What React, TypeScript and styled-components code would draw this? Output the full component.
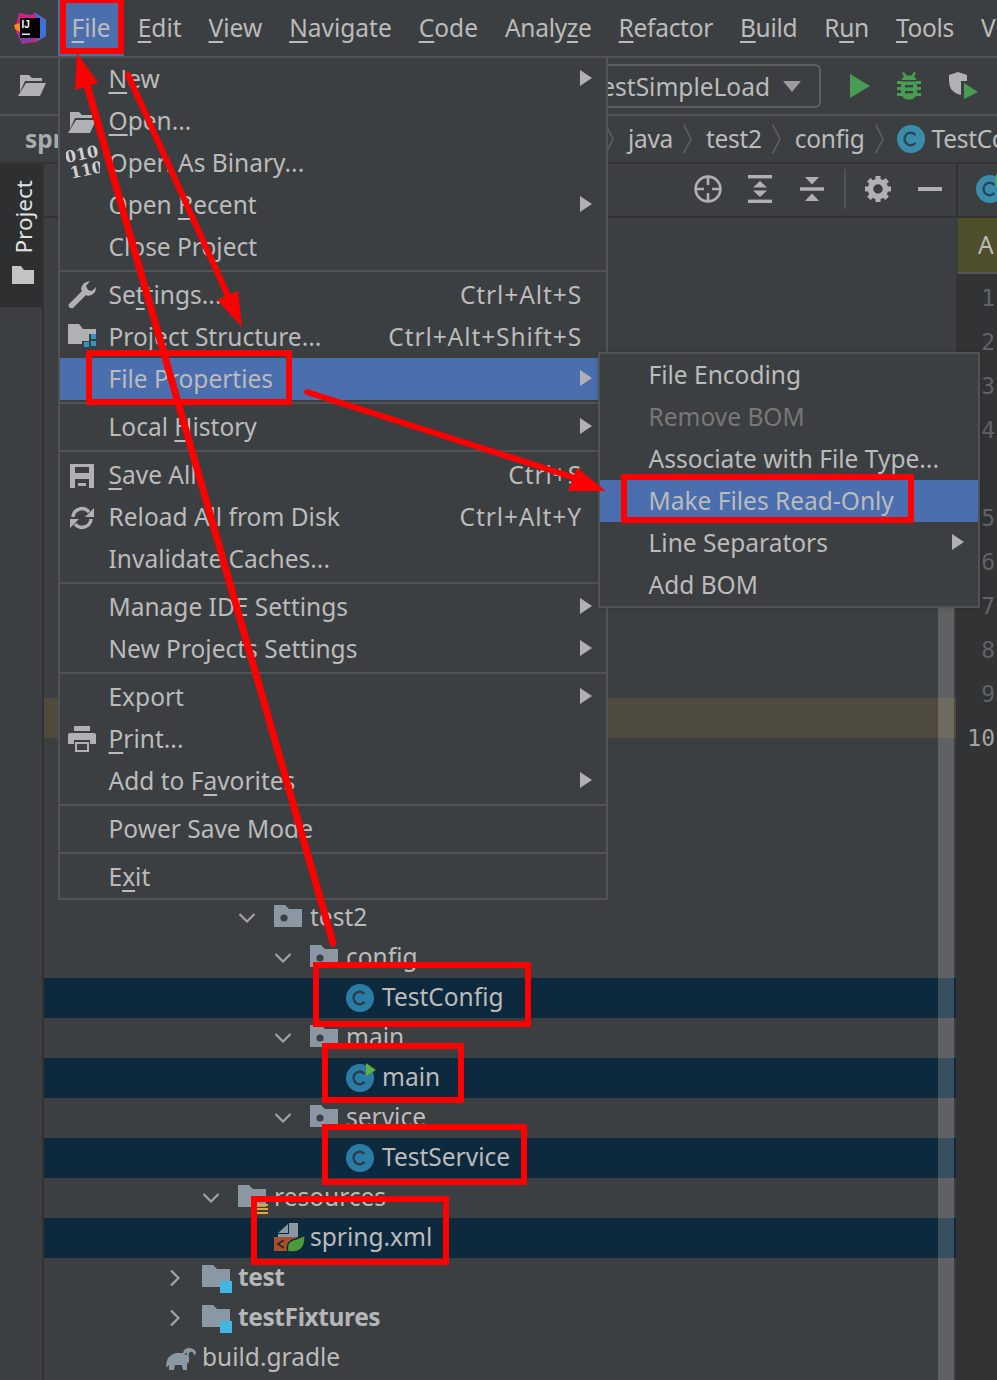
import React from 'react'
import styled, { createGlobalStyle } from 'styled-components'

const GlobalStyle = createGlobalStyle`
  html, body {
    margin: 0;
    padding: 0;
    background: #3c3f41;
  }
  * {
    box-sizing: border-box;
  }
`

const Page = styled.div`
  position: relative;
  width: 997px;
  height: 1380px;
  overflow: hidden;
  display: flex;
  flex-direction: column;
  background: #3c3f41;
  color: #bbbbbb;
  font-family: 'Noto Sans', 'Open Sans', sans-serif;
  font-size: 24.5px;
  line-height: 36px;
  white-space: nowrap;
`

const Mn = styled.span`
  text-decoration: underline;
  text-decoration-thickness: 2px;
  text-underline-offset: 4px;
  text-decoration-skip-ink: none;
`

/* menu bar */
const MenuBar = styled.div`
  flex: none;
  height: 58px;
  display: flex;
  border-bottom: 2px solid #515355;
  overflow: hidden;
`
const LogoSlot = styled.div`
  flex: none;
  width: 58px;
  padding: 12px 0 0 14px;
`
const MenuTitle = styled.div<{ $active?: boolean; $tight?: boolean }>`
  flex: none;
  height: 56px;
  padding: 10px 13.5px 0;
  letter-spacing: ${p => (p.$tight ? -0.3 : 0)}px;
  background: ${p => (p.$active ? '#4b6eaf' : 'transparent')};
`

/* toolbar */
const Toolbar = styled.div`
  flex: none;
  height: 58px;
  display: flex;
  align-items: center;
  padding: 0 19px 0 18px;
  border-bottom: 2px solid #515355;
`
const Combo = styled.div`
  margin-left: auto;
  height: 44px;
  display: flex;
  align-items: center;
  gap: 13px;
  padding: 1px 18px 0 20px;
  border: 2px solid #5e6060;
  border-radius: 6px;
`
const RunIcons = styled.div`
  display: flex;
  align-items: center;
  margin-left: 29px;
  gap: 27px;
`

/* breadcrumbs */
const NavBar = styled.div`
  flex: none;
  height: 48px;
  display: flex;
  align-items: center;
  padding: 0 0 0 25px;
  border-bottom: 2px solid #323232;
`
const RootCrumb = styled.span`
  flex: none;
  width: 570px;
  font-weight: 700;
  color: #a9abad;
`
const Crumb = styled.span<{ $withIcon?: boolean }>`
  flex: none;
  display: flex;
  align-items: center;
  gap: 7px;
  margin-left: ${p => (p.$withIcon ? -1 : 0)}px;
  letter-spacing: -0.3px;
`
const CrumbArrow = styled.svg`
  flex: none;
  margin: 0 14px 0 10px;
`

/* body */
const Body = styled.div`
  flex: 1;
  min-height: 0;
  display: flex;
`
const ToolStrip = styled.div`
  flex: none;
  width: 44px;
  border-right: 2px solid #323232;
`
const ProjectTab = styled.div`
  height: 143px;
  display: flex;
  flex-direction: column;
  align-items: center;
  padding: 16px 0 0 4px;
  gap: 12px;
  background: #2d2f30;
  color: #e2e2e2;
`
const TabLabel = styled.span`
  margin-left: 2px;
  writing-mode: vertical-rl;
  transform: rotate(180deg);
  font-size: 22.5px;
  line-height: 26px;
`

const ProjectPanel = styled.div`
  position: relative;
  flex: none;
  width: 912px;
  display: flex;
  flex-direction: column;
`
const PanelHeader = styled.div`
  flex: none;
  height: 54px;
  display: flex;
  justify-content: flex-end;
  align-items: center;
  border-bottom: 2px solid #323232;
  padding-bottom: 2px;
`
const HeaderSlot = styled.div`
  width: 52px;
  display: flex;
  justify-content: center;
`
const HeaderRule = styled.div`
  width: 2px;
  height: 40px;
  margin: 0 6px;
  background: #515355;
`
const Tree = styled.div`
  flex: 1;
  overflow: hidden;
`
const TreeRow = styled.div<{ $depth?: number; $tone?: 'selected' | 'caret' }>`
  height: 40px;
  display: flex;
  align-items: center;
  padding-left: ${p => 86 + (p.$depth ?? 0) * 36}px;
  background: ${p =>
    p.$tone === 'selected' ? '#0d293e' : p.$tone === 'caret' ? '#4e4a3e' : 'transparent'};
`
const Twisty = styled.div`
  flex: none;
  width: 36px;
  display: flex;
  align-items: center;
`
const TreeIcon = styled.div`
  flex: none;
  width: 36px;
  height: 28px;
`
const TreeLabel = styled.span<{ $bold?: boolean }>`
  padding-bottom: 3px;
  font-weight: ${p => (p.$bold ? 700 : 400)};
  letter-spacing: ${p => (p.$bold ? -0.4 : 0)}px;
  color: ${p => (p.$bold ? '#b4b6b8' : '#bbbbbb')};
`
const Scrollbar = styled.div`
  position: absolute;
  top: 400px;
  bottom: 0;
  left: 894px;
  width: 16px;
  background: rgba(255, 255, 255, 0.18);
`

/* editor edge */
const EditorColumn = styled.div`
  flex: 1;
  min-width: 0;
  overflow: hidden;
  display: flex;
  flex-direction: column;
`
const EditorTabs = styled.div`
  flex: none;
  height: 54px;
  display: flex;
  align-items: center;
  padding: 0 0 2px 18px;
  border-left: 2px solid #323232;
  border-bottom: 2px solid #323232;
`
const Banner = styled.div`
  flex: none;
  height: 56px;
  padding: 9px 0 0 20px;
  margin-left: 2px;
  background: #4f4f2b;
  border-bottom: 2px solid #555555;
`
const Gutter = styled.div`
  flex: 1;
  padding-top: 2px;
  background: #313335;
`
const LineNo = styled.div<{ $current?: boolean; $skip?: boolean }>`
  height: 44px;
  margin-top: ${p => (p.$skip ? 44 : 0)}px;
  padding-right: 2px;
  text-align: right;
  font-family: 'DejaVu Sans Mono', 'Liberation Mono', monospace;
  font-size: 23px;
  line-height: 44px;
  color: ${p => (p.$current ? '#a4a3a3' : '#606366')};
`

/* popup menus */
const Popup = styled.div`
  position: absolute;
  background: #3c3f41;
  border: 2px solid #515355;
`
const FileMenu = styled(Popup)`
  left: 58px;
  top: 56px;
  width: 550px;
`
const SubMenu = styled(Popup)`
  left: 598px;
  top: 352px;
  width: 382px;
  box-shadow: 0 0 6px rgba(0, 0, 0, 0.15);
`
const Item = styled.div<{ $active?: boolean; $disabled?: boolean }>`
  height: 42px;
  display: flex;
  align-items: center;
  padding-right: 14px;
  background: ${p => (p.$active ? '#4b6eaf' : 'transparent')};
  color: ${p => (p.$disabled ? '#777777' : '#bbbbbb')};
`
const ItemIcon = styled.div`
  flex: none;
  width: 48.5px;
  padding-left: 8px;
  height: 28px;
`
const ItemLabel = styled.span``
const Shortcut = styled.span`
  margin-left: auto;
  margin-right: 10px;
  letter-spacing: 0.9px;
`
const SubArrow = styled.svg`
  flex: none;
  margin-left: auto;
  margin-top: -2px;
`
const MenuRule = styled.div`
  height: 2px;
  margin: 2px 0;
  background: #515355;
`

const Annotations = styled.svg`
  position: absolute;
  left: 0;
  top: 0;
  pointer-events: none;
`

/* drawings */
const Logo = () => (
  <svg width="32" height="32" viewBox="0 0 32 32">
    <path d="M1 16 L5 1 L16 3 L22 1 L32 8 L32 24 L22 30 L8 32 L3 22 Z" fill="#c9257c" />
    <path d="M20 0 L32 8 L32 24 L22 30 L26 14 Z" fill="#3f6fdc" />
    <path d="M0 13 L6 11 L6 20 L1 17 Z" fill="#f68a1e" />
    <path d="M4 22 L8 31 L20 28 L10 20 Z" fill="#7c3fb8" />
    <rect x="6" y="6" width="20" height="20" fill="#000" />
    <text x="7.5" y="16" fontFamily="'Liberation Sans', sans-serif" fontSize="10" fontWeight="700" fill="#fff">IJ</text>
    <rect x="8" y="21.5" width="8" height="1.4" fill="#fff" />
  </svg>
)

const OpenFolder = ({ fill = '#afb1b3' }: { fill?: string }) => (
  <svg width="28" height="22" viewBox="0 0 28 22">
    <path d="M2 0 H11 L14 3 H24 V6 H7 L2 17 Z" fill={fill} />
    <path d="M8 8 H28 L22 21 H0 Z" fill={fill} />
  </svg>
)

const Triangle = ({ w = 12, h = 16, color = '#afb1b3' }: { w?: number; h?: number; color?: string }) => (
  <svg width={w} height={h} viewBox={`0 0 ${w} ${h}`}>
    <path d={`M0 0 L${w} ${h / 2} L0 ${h} Z`} fill={color} />
  </svg>
)

const Bug = () => (
  <svg width="24" height="28" viewBox="0 0 24 28" fill="#499c54">
    <path d="M5 1 L7 0 L9.5 3.5 H14.5 L17 0 L19 1 L17 5 Q19 6 19.5 8 H4.5 Q5 6 7 5 Z" />
    <path d="M4 9.5 H20 V22 Q18 27.5 12 27.5 Q6 27.5 4 22 Z" />
    <rect x="0" y="9" width="5" height="3" />
    <rect x="19" y="9" width="5" height="3" />
    <rect x="0" y="15" width="5" height="3" />
    <rect x="19" y="15" width="5" height="3" />
    <rect x="0" y="21" width="5" height="3" />
    <rect x="19" y="21" width="5" height="3" />
    <rect x="8" y="13" width="8" height="2.4" fill="#3c3f41" />
    <rect x="8" y="19" width="8" height="2.4" fill="#3c3f41" />
  </svg>
)

const Coverage = () => (
  <svg width="30" height="30" viewBox="0 0 30 30">
    <path d="M1 4 L10 1 L19 4 V10 H13 V24 Q7 23 3 18 Q1 14 1 10 Z" fill="#afb1b3" />
    <path d="M16 12 L30 21 L16 28 Z" fill="#499c54" />
  </svg>
)

const ClassIcon = ({ run, fill = '#2a7ca5', ink = '#283d4d' }: { run?: boolean; fill?: string; ink?: string }) => (
  <svg width="28" height="28" viewBox="0 0 28 28" style={{ overflow: 'visible' }}>
    <circle cx="14" cy="14" r="14" fill={fill} />
    <path d="M18.5 10 A6.2 6.2 0 1 0 18.5 18" fill="none" stroke={ink} strokeWidth="2.4" />
    {run && <path d="M20 -1 L30 6 L20 12 Z" fill="#5fb03e" />}
  </svg>
)

const Folder = ({ dot, marker }: { dot?: boolean; marker?: 'blue' | 'lines' }) => (
  <svg width="34" height="26" viewBox="0 0 34 26" style={{ overflow: 'visible' }}>
    <path d="M0 0 H11 L15 4 H28 V22 H0 Z" fill="#8a98a3" />
    {dot && <circle cx="10" cy="13" r="3.6" fill="#3c3f41" />}
    {marker === 'blue' && <rect x="18" y="16" width="12" height="12" fill="#40b6e0" />}
    {marker === 'lines' && (
      <g fill="#e8a33d">
        <rect x="19" y="19" width="11" height="2" />
        <rect x="19" y="23" width="11" height="2" />
        <rect x="19" y="27" width="11" height="2" />
      </g>
    )}
  </svg>
)

const Chevron = ({ open }: { open?: boolean }) => (
  <svg width="18" height="18" viewBox="0 0 18 18" fill="none" stroke="#a0a2a4" strokeWidth="2.2">
    {open ? <path d="M1.5 5 L9 12.5 L16.5 5" /> : <path d="M5 1.5 L12.5 9 L5 16.5" />}
  </svg>
)

const SpringXml = () => (
  <svg width="32" height="32" viewBox="0 0 32 32" style={{ marginTop: -2 }}>
    <path d="M4 11 L14 2 V11 Z M15 1 H24 V15 H4 V12 H15 Z" fill="#8a98a3" />
    <rect x="0" y="15" width="23" height="14" fill="#a9502a" />
    <path d="M10 18 L4 22 L10 26" fill="none" stroke="#2f2a26" strokeWidth="1.8" />
    <path d="M14 30 Q11 19 22 17 L31 13 Q32 29 20 30 Z" fill="#4c9a3c" stroke="#0d293e" strokeWidth="1.4" />
  </svg>
)

const Gradle = () => (
  <svg width="30" height="24" viewBox="0 0 30 24" fill="#8a98a3" style={{ marginTop: 2 }}>
    <path d="M0 20 Q0 8 10 6 H17 Q18 1 23 1 Q28 1 30 5 Q30 8 28 8 Q27 4 24 5 Q22 6 23 10 Q24 15 21 17 V23 H17 L16 18 H9 L8 23 H3 L3 18 Q2 20 0 20 Z" />
    <circle cx="20" cy="7" r="1" fill="#3c3f41" />
  </svg>
)

const ChevronSep = () => (
  <CrumbArrow width="9" height="30" viewBox="0 0 9 30" fill="none" stroke="#5e6060" strokeWidth="1.6">
    <path d="M0.6 0.6 L8 15 L0.6 29.4" />
  </CrumbArrow>
)

const MenuArrow = () => (
  <SubArrow width="12" height="16" viewBox="0 0 12 16">
    <path d="M0 0 L12 8 L0 16 Z" fill="#afb1b3" />
  </SubArrow>
)

const Binary = () => (
  <svg width="34" height="36" viewBox="0 0 34 36" style={{ margin: '-4px 0 0 -2px' }}>
    <g fontFamily="'DejaVu Serif', 'Liberation Serif', serif" fontSize="16" fontWeight="700" fill="#d0d0d0">
      <text x="-1" y="15" transform="rotate(-12 14 10)">010</text>
      <text x="4" y="31" transform="rotate(-12 18 26)">110</text>
    </g>
  </svg>
)

const Wrench = () => (
  <svg width="28" height="28" viewBox="0 0 28 28" fill="#afb1b3">
    <path d="M28 6 Q28 14 20 15 L18 14 L5 27 Q3 28 1 26 Q0 24 1 23 L14 10 L13 8 Q14 1 22 0 L18 5 L20 9 L24 10 Z" />
  </svg>
)

const ProjectStructure = () => (
  <svg width="30" height="28" viewBox="0 0 30 28" fill="#afb1b3">
    <path d="M0 1 H11 L15 6 H28 V11 H21 V18 H14 V21 H0 Z" />
    <rect x="23" y="11" width="5" height="5" fill="#3592c4" />
    <rect x="23" y="18" width="5" height="5" fill="#3592c4" />
    <rect x="16" y="19" width="5" height="5" fill="#3592c4" />
  </svg>
)

const Save = () => (
  <svg width="24" height="24" viewBox="0 0 24 24" fill="#afb1b3" style={{ marginLeft: 2 }}>
    <path d="M0 0 H24 V24 H0 Z M5 3 V9 H19 V3 Z M5 15 V24 H19 V15 Z" fillRule="evenodd" />
    <rect x="8" y="19" width="8" height="3" />
  </svg>
)

const Reload = () => (
  <svg width="24" height="24" viewBox="0 0 24 24" fill="none" stroke="#afb1b3" strokeWidth="3.4" style={{ marginLeft: 2 }}>
    <path d="M3 11 A9 9 0 0 1 19 6" />
    <path d="M21 13 A9 9 0 0 1 5 18" />
    <path d="M24 2 V11 H15 Z" fill="#afb1b3" stroke="none" />
    <path d="M0 22 V13 H9 Z" fill="#afb1b3" stroke="none" />
  </svg>
)

const Printer = () => (
  <svg width="28" height="26" viewBox="0 0 28 26" fill="#afb1b3">
    <rect x="6" y="0" width="16" height="5" />
    <path d="M2 7 H26 Q28 7 28 9 V18 H22 V14 H6 V18 H0 V9 Q0 7 2 7 Z" />
    <path d="M7 16 H21 V26 H7 Z M9 18 V24 H19 V18 Z" fillRule="evenodd" />
  </svg>
)

const App = () => {
  return (
    <Page>
      <GlobalStyle />

      <MenuBar>
        <LogoSlot>
          <Logo />
        </LogoSlot>
        <MenuTitle $active><Mn>F</Mn>ile</MenuTitle>
        <MenuTitle><Mn>E</Mn>dit</MenuTitle>
        <MenuTitle><Mn>V</Mn>iew</MenuTitle>
        <MenuTitle><Mn>N</Mn>avigate</MenuTitle>
        <MenuTitle><Mn>C</Mn>ode</MenuTitle>
        <MenuTitle $tight>Analy<Mn>z</Mn>e</MenuTitle>
        <MenuTitle $tight><Mn>R</Mn>efactor</MenuTitle>
        <MenuTitle $tight><Mn>B</Mn>uild</MenuTitle>
        <MenuTitle $tight>R<Mn>u</Mn>n</MenuTitle>
        <MenuTitle $tight><Mn>T</Mn>ools</MenuTitle>
        <MenuTitle>VCS</MenuTitle>
      </MenuBar>

      <Toolbar>
        <OpenFolder />
        <Combo>
          TestSimpleLoad
          <svg width="18" height="11" viewBox="0 0 18 11">
            <path d="M0 0 H18 L9 11 Z" fill="#9a9c9e" />
          </svg>
        </Combo>
        <RunIcons>
          <Triangle w={20} h={24} color="#499c54" />
          <Bug />
          <Coverage />
        </RunIcons>
      </Toolbar>

      <NavBar>
        <RootCrumb>spring-framework</RootCrumb>
        <ChevronSep />
        <Crumb>java</Crumb>
        <ChevronSep />
        <Crumb>test2</Crumb>
        <ChevronSep />
        <Crumb>config</Crumb>
        <ChevronSep />
        <Crumb $withIcon>
          <ClassIcon fill="#3b8cab" ink="#24475a" />
          TestConfig
        </Crumb>
      </NavBar>

      <Body>
        <ToolStrip>
          <ProjectTab>
            <TabLabel>Project</TabLabel>
            <svg width="22" height="18" viewBox="0 0 22 18">
              <path d="M0 0 H9 L12 4 H22 V18 H0 Z" fill="#c4c4c4" />
            </svg>
          </ProjectTab>
        </ToolStrip>

        <ProjectPanel>
          <PanelHeader>
            <HeaderSlot>
              <svg width="28" height="28" viewBox="0 0 28 28" fill="none" stroke="#afb1b3" strokeWidth="2.6">
                <circle cx="14" cy="14" r="12.4" />
                <path d="M14 2 V10 M14 18 V26 M2 14 H10 M18 14 H26" />
              </svg>
            </HeaderSlot>
            <HeaderSlot>
              <svg width="24" height="28" viewBox="0 0 24 28" fill="#afb1b3">
                <rect x="0" y="0" width="24" height="3.4" />
                <rect x="0" y="24.6" width="24" height="3.4" />
                <path d="M12 6 L19 12.5 H5 Z M12 22 L19 15.5 H5 Z" />
              </svg>
            </HeaderSlot>
            <HeaderSlot>
              <svg width="24" height="26" viewBox="0 0 24 26" fill="#afb1b3">
                <rect x="0" y="11.3" width="24" height="3.4" />
                <path d="M5 1 H19 L12 8.5 Z M5 25 H19 L12 17.5 Z" />
              </svg>
            </HeaderSlot>
            <HeaderRule />
            <HeaderSlot>
              <svg width="26" height="26" viewBox="0 0 26 26">
                <circle cx="13" cy="13" r="7.5" fill="none" stroke="#afb1b3" strokeWidth="5.5" />
                <g stroke="#afb1b3" strokeWidth="5">
                  <path d="M13 0 V5 M13 21 V26 M0 13 H5 M21 13 H26 M3.8 3.8 L7.3 7.3 M18.7 18.7 L22.2 22.2 M22.2 3.8 L18.7 7.3 M7.3 18.7 L3.8 22.2" />
                </g>
              </svg>
            </HeaderSlot>
            <HeaderSlot>
              <svg width="24" height="4" viewBox="0 0 24 4">
                <rect width="24" height="4" fill="#afb1b3" />
              </svg>
            </HeaderSlot>
          </PanelHeader>

          <Tree>
            {Array.from({ length: 12 }, (_, i) => (
              <TreeRow key={i} />
            ))}
            <TreeRow $tone="caret" />
            {Array.from({ length: 4 }, (_, i) => (
              <TreeRow key={i} />
            ))}
            <TreeRow $depth={3}>
              <Twisty><Chevron open /></Twisty>
              <TreeIcon><Folder dot /></TreeIcon>
              <TreeLabel>test2</TreeLabel>
            </TreeRow>
            <TreeRow $depth={4}>
              <Twisty><Chevron open /></Twisty>
              <TreeIcon><Folder dot /></TreeIcon>
              <TreeLabel>config</TreeLabel>
            </TreeRow>
            <TreeRow $depth={5} $tone="selected">
              <Twisty />
              <TreeIcon><ClassIcon /></TreeIcon>
              <TreeLabel>TestConfig</TreeLabel>
            </TreeRow>
            <TreeRow $depth={4}>
              <Twisty><Chevron open /></Twisty>
              <TreeIcon><Folder dot /></TreeIcon>
              <TreeLabel>main</TreeLabel>
            </TreeRow>
            <TreeRow $depth={5} $tone="selected">
              <Twisty />
              <TreeIcon><ClassIcon run /></TreeIcon>
              <TreeLabel>main</TreeLabel>
            </TreeRow>
            <TreeRow $depth={4}>
              <Twisty><Chevron open /></Twisty>
              <TreeIcon><Folder dot /></TreeIcon>
              <TreeLabel>service</TreeLabel>
            </TreeRow>
            <TreeRow $depth={5} $tone="selected">
              <Twisty />
              <TreeIcon><ClassIcon /></TreeIcon>
              <TreeLabel>TestService</TreeLabel>
            </TreeRow>
            <TreeRow $depth={2}>
              <Twisty><Chevron open /></Twisty>
              <TreeIcon><Folder marker="lines" /></TreeIcon>
              <TreeLabel>resources</TreeLabel>
            </TreeRow>
            <TreeRow $depth={3} $tone="selected">
              <Twisty />
              <TreeIcon><SpringXml /></TreeIcon>
              <TreeLabel>spring.xml</TreeLabel>
            </TreeRow>
            <TreeRow $depth={1}>
              <Twisty><Chevron /></Twisty>
              <TreeIcon><Folder marker="blue" /></TreeIcon>
              <TreeLabel $bold>test</TreeLabel>
            </TreeRow>
            <TreeRow $depth={1}>
              <Twisty><Chevron /></Twisty>
              <TreeIcon><Folder marker="blue" /></TreeIcon>
              <TreeLabel $bold>testFixtures</TreeLabel>
            </TreeRow>
            <TreeRow>
              <Twisty />
              <TreeIcon><Gradle /></TreeIcon>
              <TreeLabel>build.gradle</TreeLabel>
            </TreeRow>
          </Tree>
          <Scrollbar />
        </ProjectPanel>

        <EditorColumn>
          <EditorTabs>
            <ClassIcon run fill="#3b8cab" ink="#24475a" />
          </EditorTabs>
          <Banner>A</Banner>
          <Gutter>
            {[1, 2, 3, 4].map(n => (
              <LineNo key={n}>{n}</LineNo>
            ))}
            <LineNo $skip>5</LineNo>
            {[6, 7, 8, 9].map(n => (
              <LineNo key={n}>{n}</LineNo>
            ))}
            <LineNo $current>10</LineNo>
          </Gutter>
        </EditorColumn>
      </Body>

      <FileMenu>
        <Item><ItemIcon /><ItemLabel><Mn>N</Mn>ew</ItemLabel><MenuArrow /></Item>
        <Item><ItemIcon><OpenFolder /></ItemIcon><ItemLabel><Mn>O</Mn>pen...</ItemLabel></Item>
        <Item><ItemIcon><Binary /></ItemIcon><ItemLabel>Open As Binary...</ItemLabel></Item>
        <Item><ItemIcon /><ItemLabel>Open <Mn>R</Mn>ecent</ItemLabel><MenuArrow /></Item>
        <Item><ItemIcon /><ItemLabel>Close Project</ItemLabel></Item>
        <MenuRule />
        <Item><ItemIcon><Wrench /></ItemIcon><ItemLabel>Se<Mn>t</Mn>tings...</ItemLabel><Shortcut>Ctrl+Alt+S</Shortcut></Item>
        <Item><ItemIcon><ProjectStructure /></ItemIcon><ItemLabel>Project Structure...</ItemLabel><Shortcut>Ctrl+Alt+Shift+S</Shortcut></Item>
        <Item $active><ItemIcon /><ItemLabel>File Properties</ItemLabel><MenuArrow /></Item>
        <MenuRule />
        <Item><ItemIcon /><ItemLabel>Local <Mn>H</Mn>istory</ItemLabel><MenuArrow /></Item>
        <MenuRule />
        <Item><ItemIcon><Save /></ItemIcon><ItemLabel><Mn>S</Mn>ave All</ItemLabel><Shortcut>Ctrl+S</Shortcut></Item>
        <Item><ItemIcon><Reload /></ItemIcon><ItemLabel>Reload All from Disk</ItemLabel><Shortcut>Ctrl+Alt+Y</Shortcut></Item>
        <Item><ItemIcon /><ItemLabel>Invalidate Caches...</ItemLabel></Item>
        <MenuRule />
        <Item><ItemIcon /><ItemLabel>Manage IDE Settings</ItemLabel><MenuArrow /></Item>
        <Item><ItemIcon /><ItemLabel>New Projects Settings</ItemLabel><MenuArrow /></Item>
        <MenuRule />
        <Item><ItemIcon /><ItemLabel>Export</ItemLabel><MenuArrow /></Item>
        <Item><ItemIcon><Printer /></ItemIcon><ItemLabel><Mn>P</Mn>rint...</ItemLabel></Item>
        <Item><ItemIcon /><ItemLabel>Add to F<Mn>a</Mn>vorites</ItemLabel><MenuArrow /></Item>
        <MenuRule />
        <Item><ItemIcon /><ItemLabel>Power Save Mode</ItemLabel></Item>
        <MenuRule />
        <Item><ItemIcon /><ItemLabel>E<Mn>x</Mn>it</ItemLabel></Item>
      </FileMenu>

      <SubMenu>
        <Item><ItemIcon /><ItemLabel>File Encoding</ItemLabel></Item>
        <Item $disabled><ItemIcon /><ItemLabel>Remove BOM</ItemLabel></Item>
        <Item><ItemIcon /><ItemLabel>Associate with File Type...</ItemLabel></Item>
        <Item $active><ItemIcon /><ItemLabel>Make Files Read-Only</ItemLabel></Item>
        <Item><ItemIcon /><ItemLabel>Line Separators</ItemLabel><MenuArrow /></Item>
        <Item><ItemIcon /><ItemLabel>Add BOM</ItemLabel></Item>
      </SubMenu>

      <Annotations width="997" height="1380" viewBox="0 0 997 1380">
        <g fill="none" stroke="#ff0000" strokeWidth="6">
          <rect x="63" y="0" width="58" height="51" />
          <rect x="89" y="353" width="200" height="49" />
          <rect x="624" y="477" width="287" height="43" />
          <rect x="316" y="965" width="212" height="59" />
          <rect x="325" y="1046" width="136" height="54" />
          <rect x="325" y="1127" width="199" height="55" />
          <rect x="254" y="1199" width="192" height="63" />
        </g>
        <g fill="#ff0000" stroke="none">
          <path d="M77 53 L75 90 L98 83 Z" />
          <path d="M242 327 L217 300 L238 291 Z" />
          <path d="M606 491 L568 491 L577 468 Z" />
        </g>
        <g stroke="#ff0000" fill="none" strokeLinecap="round">
          <path d="M87 85 L333 943" strokeWidth="7" />
          <path d="M128 75 L228 296" strokeWidth="6" />
          <path d="M307 392 L572 477" strokeWidth="6" />
        </g>
      </Annotations>
    </Page>
  )
}

export default App
